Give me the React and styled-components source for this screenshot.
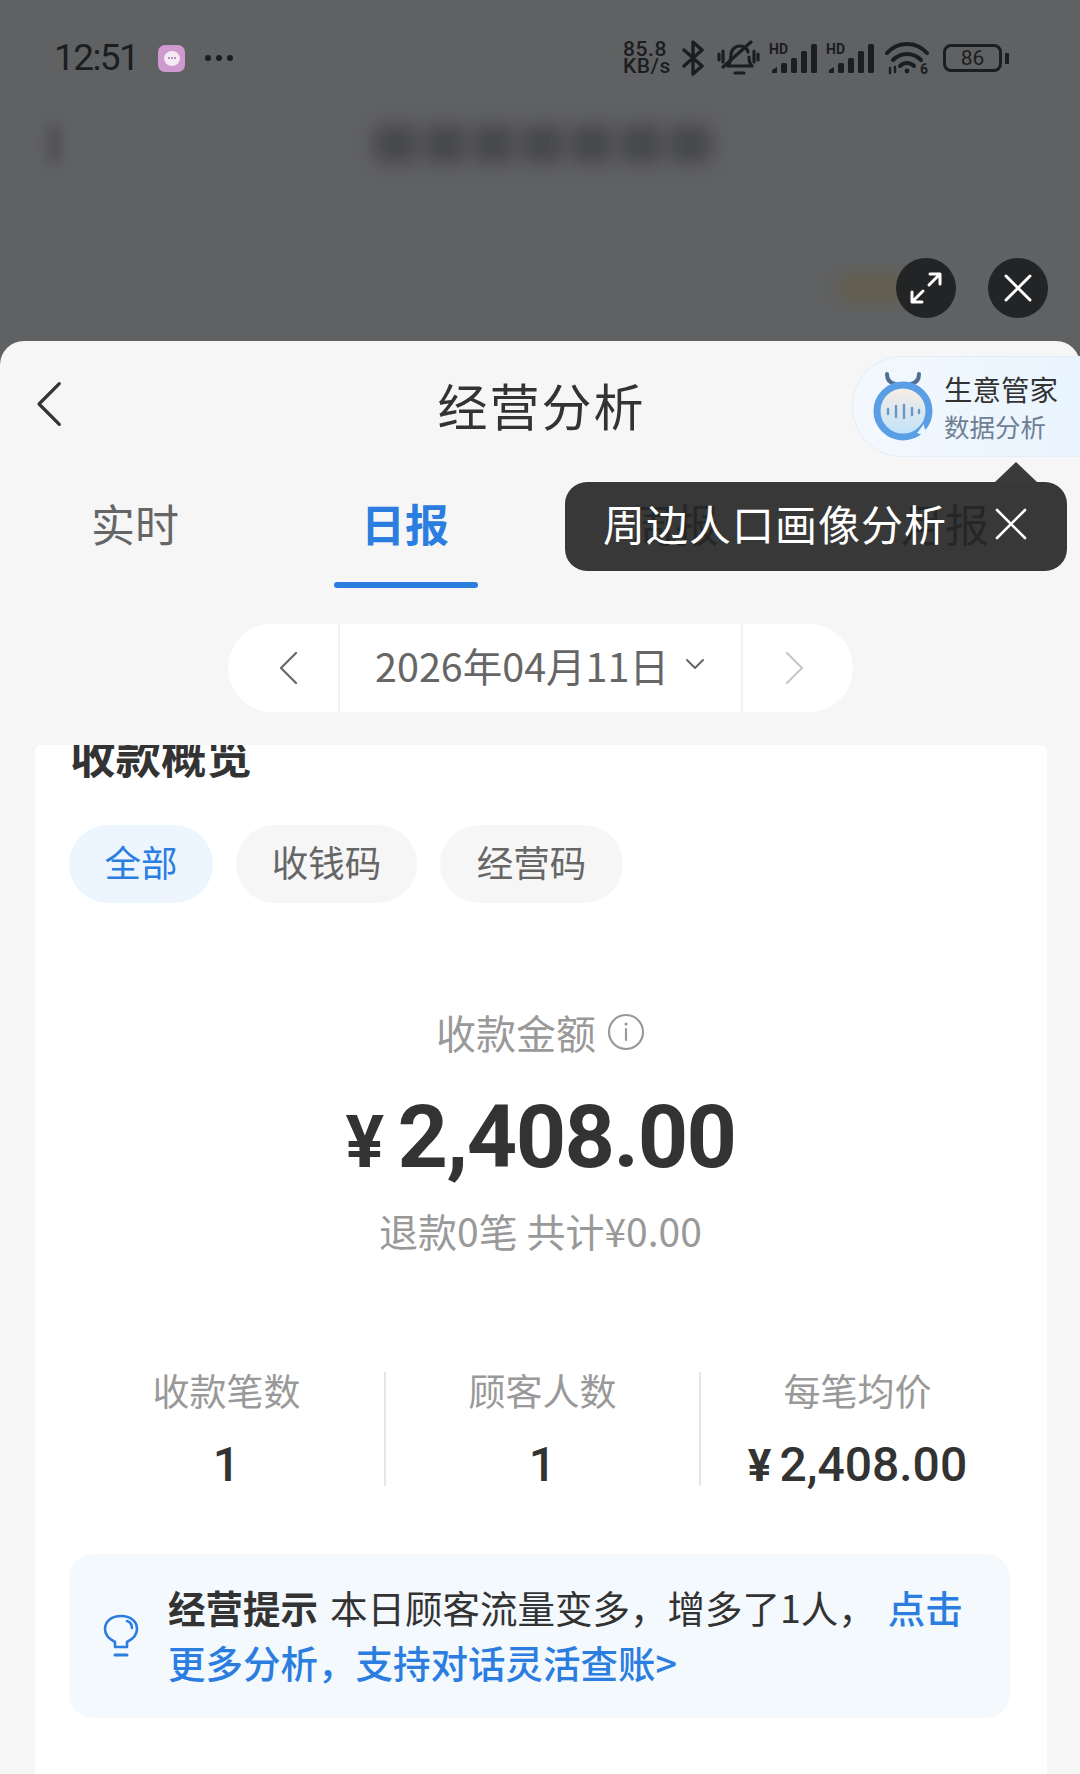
import React from 'react';
import styled, {createGlobalStyle} from 'styled-components';

const GlobalStyle = createGlobalStyle`
  html, body {
    margin: 0;
    padding: 0;
    background: #606163;
  }

  * {
    box-sizing: border-box;
  }

  body {
    font-family: "Noto Sans CJK SC", "Noto Sans", sans-serif;
  }
`

const Page = styled.div`
  width: 1080px;
  height: 1774px;
  overflow: hidden;
  position: relative;
  display: flex;
  flex-direction: column;
  background: #606163;
`

const Backdrop = styled.div`
  height: 341px;
  flex: none;
  display: flex;
  flex-direction: column;
  padding: 40px 72px 0 54px;
`

const StatusBar = styled.div`
  height: 36px;
  display: flex;
  align-items: center;
  justify-content: space-between;
  color: #1b1d1f;
`

const StatusLeft = styled.div`
  display: flex;
  align-items: center;
`

const Time = styled.span`
  font-family: "Roboto", sans-serif;
  font-size: 37px;
  letter-spacing: -1.6px;
  line-height: 36px;
  width: 104px;
`

const AppBadge = styled.span`
  width: 27px;
  height: 27px;
  border-radius: 7px;
  background: #cf9ad0;
  display: flex;
  align-items: center;
  justify-content: center;
`

const BadgeDot = styled.span`
  width: 16px;
  height: 15px;
  border-radius: 50%;
  background: #f4eaf5;
  display: flex;
  align-items: center;
  justify-content: center;
  gap: 1px;

  i {
    width: 2px;
    height: 2px;
    border-radius: 50%;
    background: #a678a8;
  }
`

const MoreDots = styled.span`
  display: flex;
  gap: 5px;
  margin-left: 20px;

  i {
    width: 6px;
    height: 6px;
    border-radius: 50%;
    background: #1b1d1f;
  }
`

const StatusRight = styled.div`
  display: flex;
  align-items: center;
  gap: 9px;
`

const Speed = styled.span`
  font-family: "Roboto", sans-serif;
  font-weight: 500;
  font-size: 21px;
  line-height: 17px;
  width: 50px;
  letter-spacing: .6px;
  white-space: nowrap;
`

const Battery = styled.span`
  width: 59px;
  height: 28px;
  margin: 0 6px 0 5px;
  border: 3px solid #1b1d1f;
  border-radius: 8px;
  font-family: "Roboto", sans-serif;
  font-size: 21px;
  line-height: 22px;
  text-align: center;
  position: relative;

  &::after {
    content: "";
    position: absolute;
    right: -10px;
    top: 6px;
    width: 4px;
    height: 11px;
    border-radius: 1px;
    background: #1b1d1f;
  }
`

const BluetoothIcon = styled.svg`
  margin-right: 3px;
`

const WifiIcon = styled.svg`
  margin-left: 2px;
`

const BlurRow = styled.div`
  margin-top: 48px;
  height: 40px;
  display: flex;
  align-items: center;
`

const BlurChevron = styled.span`
  width: 12px;
  height: 40px;
  margin-left: -6px;
  background: #4e4f51;
  border-radius: 6px;
  filter: blur(6px);
`

const BlurTitle = styled.div`
  margin-left: 313px;
  display: flex;
  gap: 4px;

  span {
    width: 45px;
    height: 38px;
    border-radius: 12px;
    background: #47484a;
    filter: blur(9px);
  }
`

const FloatRow = styled.div`
  margin-top: 94px;
  margin-right: -40px;
  display: flex;
  justify-content: flex-end;
  align-items: center;
  gap: 32px;
  position: relative;
`

const BlurTag = styled.span`
  position: absolute;
  right: 118px;
  width: 92px;
  height: 30px;
  background: #625e50;
  filter: blur(7px);
`

const RoundButton = styled.button`
  position: relative;
  width: 60px;
  height: 60px;
  border: none;
  padding: 0;
  border-radius: 50%;
  background: #232425;
  display: flex;
  align-items: center;
  justify-content: center;
`

const Sheet = styled.div`
  flex: 1;
  min-height: 0;
  position: relative;
  display: flex;
  flex-direction: column;
  background: #f6f6f6;
  border-radius: 24px 24px 0 0;
`

const Header = styled.div`
  height: 120px;
  padding: 6px 0 0 3px;
  display: flex;
  align-items: center;
  justify-content: center;
  position: relative;
`

const BackButton = styled.div`
  position: absolute;
  left: 35px;
  top: 40px;
  line-height: 0;
`

const Title = styled.h1`
  margin: 0;
  font-size: 50px;
  font-weight: 400;
  letter-spacing: 2px;
  color: #333;
  line-height: 1;
`

const Assistant = styled.div`
  position: absolute;
  right: 0;
  top: 15px;
  width: 228px;
  height: 101px;
  display: flex;
  align-items: center;
  gap: 11px;
  padding-left: 20px;
  border: 1px solid #e3eef9;
  border-right: none;
  border-radius: 50px 0 0 50px;
  background: linear-gradient(90deg, #f3f8fd, #e9f4fe);
`

const AssistantText = styled.div`
  display: flex;
  flex-direction: column;
  gap: 2px;
`

const AssistantName = styled.span`
  font-size: 28.5px;
  line-height: 36px;
  color: #333;
  white-space: nowrap;
`

const AssistantSub = styled.span`
  font-size: 25.5px;
  line-height: 34px;
  color: #6f8095;
  white-space: nowrap;
`

const Tabs = styled.div`
  height: 127px;
  display: grid;
  grid-template-columns: repeat(4, 270px);
`

const Tab = styled.div`
  position: relative;
  display: flex;
  justify-content: center;
  padding-top: 31px;
  font-size: 44px;
  line-height: 62px;
  font-weight: ${p => (p.$active ? 700 : 400)};
  color: ${p => (p.$active ? '#2b7de0' : '#666')};

  ${p => p.$active && `
    &::after {
      content: "";
      position: absolute;
      left: 64px;
      bottom: 0;
      width: 144px;
      height: 6px;
      border-radius: 3px;
      background: #2b7de0;
    }
  `}
`

const Tooltip = styled.div`
  position: absolute;
  left: 565px;
  top: 141px;
  width: 502px;
  height: 89px;
  border-radius: 22px;
  background: rgba(30, 30, 30, .88);
  color: #fff;
  display: flex;
  align-items: center;
  justify-content: space-between;
  padding: 0 40px 5px 38px;
  font-size: 42px;
  letter-spacing: 1px;
  white-space: nowrap;

  &::before {
    content: "";
    position: absolute;
    right: 30px;
    top: -20px;
    border-left: 21px solid transparent;
    border-right: 21px solid transparent;
    border-bottom: 20px solid #3a3a3a;
  }
`

const TooltipText = styled.span`
  padding-bottom: 4px;
`

const DateBar = styled.div`
  margin: 36px auto 0;
  width: 625px;
  height: 88px;
  flex: none;
  display: grid;
  grid-template-columns: 112px 1fr 112px;
  background: #fff;
  border-radius: 44px;
`

const DateArrow = styled.div`
  display: flex;
  align-items: center;
  justify-content: center;
  padding-left: ${p => (p.$side === 'left' ? 10 : 0)}px;
  padding-right: ${p => (p.$side === 'right' ? 6 : 0)}px;
  ${p => p.$side === 'left' ? 'border-right' : 'border-left'}: 2px solid #f2f2f2;
`

const DateLabel = styled.div`
  display: flex;
  align-items: center;
  justify-content: center;
  gap: 16px;
  padding-bottom: 8px;
  font-size: 39.5px;
  color: #666;
  white-space: nowrap;
`

const Scroller = styled.div`
  margin: 33px 33px 0 35px;
  flex: 1;
  min-height: 0;
  overflow: hidden;
  background: #fff;
  border-radius: 6px 6px 0 0;
  padding: 0 37px 0 34px;
`

const SectionTitle = styled.h2`
  margin: -21px 0 0 1px;
  font-size: 45.5px;
  line-height: 60px;
  font-weight: 700;
  color: #333;
`

const Chips = styled.div`
  margin-top: 41px;
  display: flex;
  gap: 23px;
`

const Chip = styled.div`
  height: 78px;
  width: ${p => p.$width}px;
  border-radius: 39px;
  padding-bottom: 6px;
  display: flex;
  align-items: center;
  justify-content: center;
  font-size: 36.5px;
  background: ${p => (p.$active ? '#edf6fe' : '#f6f6f6')};
  color: ${p => (p.$active ? '#2b7de0' : '#666')};
`

const Summary = styled.div`
  margin-top: 105px;
  padding-left: 2px;
  display: flex;
  flex-direction: column;
  align-items: center;
`

const SummaryLabel = styled.div`
  display: flex;
  align-items: center;
  gap: 11px;
  font-size: 40px;
  line-height: 48px;
  color: #999;
`

const Amount = styled.div`
  margin-top: 26px;
  display: flex;
  align-items: baseline;
  gap: 15px;
  font-family: "Roboto", sans-serif;
  font-weight: 700;
  color: #333;
  font-size: 88px;
  letter-spacing: -1.5px;
  line-height: 110px;
`

const Yen = styled.span`
  font-size: ${p => p.$size}px;
  font-weight: 700;
`

const Refund = styled.div`
  margin-top: 7px;
  font-size: 39px;
  line-height: 50px;
  color: #999;
`

const Stats = styled.div`
  margin-top: 117px;
  display: grid;
  grid-template-columns: repeat(3, 315px);
`

const Stat = styled.div`
  height: 114px;
  display: flex;
  flex-direction: column;
  align-items: center;
  border-left: ${p => (p.$first ? 'none' : '2px solid #e6e6e6')};
`

const StatLabel = styled.div`
  font-size: 37px;
  line-height: 36px;
  color: #999;
`

const StatValue = styled.div`
  margin-top: 29px;
  font-family: "Roboto", sans-serif;
  font-weight: 500;
  font-size: 48px;
  line-height: 56px;
  color: #333;
  display: flex;
  align-items: baseline;
  gap: 8px;
`

const TipBox = styled.div`
  margin-top: 68px;
  width: 941px;
  height: 164px;
  border-radius: 24px;
  background: #f4f9fe;
  display: flex;
  align-items: center;
  padding: 0 0 0 34px;
  gap: 29px;
`

const TipText = styled.div`
  width: 815px;
  padding-bottom: 4px;
  font-size: 37.5px;
  line-height: 55px;
  color: #333;
`

const TipHead = styled.b`
  font-weight: 700;
  margin-right: 12px;
`

const TipLink = styled.span`
  color: #2b7de0;
  font-weight: 500;
  margin-left: 12px;
`

const Chevron = ({dir, color, w, h, sw}) => (
    <svg width={w} height={h} viewBox="0 0 20 34" fill="none" stroke={color} strokeWidth={sw} strokeLinecap="round"
         strokeLinejoin="round" preserveAspectRatio="none">
        <path d={dir === 'left' ? 'M18 2 3 17l15 15' : 'M2 2l15 15L2 32'}/>
    </svg>
)

const Signal = () => (
    <svg width="48" height="32" viewBox="0 0 48 32" fill="#1b1d1f">
        <text x="0" y="12" fontSize="14" fontWeight="700" fontFamily="Roboto, sans-serif">HD</text>
        <path d="M3 31v-3l5-3v6z"/>
        <rect x="12" y="21" width="6" height="10" rx="1.5"/>
        <rect x="22" y="16" width="6" height="15" rx="1.5"/>
        <rect x="32" y="9" width="6" height="22" rx="1.5"/>
        <rect x="42" y="2" width="6" height="29" rx="1.5"/>
    </svg>
)

const Bluetooth = () => (
    <BluetoothIcon width="23" height="36" viewBox="0 0 23 36" fill="none" stroke="#1b1d1f" strokeWidth="3.4"
         strokeLinejoin="round" strokeLinecap="round">
        <path d="M2 10l18 16-9 8V2l9 8L2 26"/>
    </BluetoothIcon>
)

const MutedBell = () => (
    <svg width="43" height="37" viewBox="0 0 43 37" fill="none" stroke="#1b1d1f" strokeWidth="3.2"
         strokeLinecap="round" strokeLinejoin="round">
        <path d="M11 26c2-3 3-6 3-11 0-5 4-9 9-9 4 0 7 2 8 6M32 17c0 4 1 7 3 9H11"/>
        <path d="M6 27 34 2"/>
        <path d="M18 33h9"/>
        <path d="M2 14v6M6 11v11M37 11v11M41 14v6"/>
    </svg>
)

const Wifi = () => (
    <WifiIcon width="44" height="34" viewBox="0 0 44 34" fill="none" stroke="#1b1d1f" strokeWidth="4"
         strokeLinecap="round">
        <path d="M2 12c11-12 29-12 40 0"/>
        <path d="M8 19c8-8 20-8 28 0"/>
        <path d="M15 25c4-4 10-4 14 0"/>
        <circle cx="22" cy="30" r="2.4" fill="#1b1d1f" stroke="none"/>
        <path d="M5 27v5M10 26v5" strokeWidth="2.4"/>
        <text x="35" y="33" fontSize="14" fontWeight="700" fontFamily="Roboto, sans-serif" fill="#1b1d1f"
              stroke="none">6</text>
    </WifiIcon>
)

const AssistantLogo = () => (
    <svg width="60" height="69" viewBox="0 0 60 69" fill="none">
        <defs>
            <linearGradient id="face" x1="0" y1="0" x2="0" y2="1">
                <stop offset="0" stopColor="#fbeee4"/>
                <stop offset="1" stopColor="#bfe2fb"/>
            </linearGradient>
        </defs>
        <path d="M22 12c-5-1-8-4-8-10M38 12c5-1 8-4 8-10" stroke="#4f6f92" strokeWidth="4" strokeLinecap="round"/>
        <circle cx="30" cy="39" r="26" fill="url(#face)" stroke="#5a9fe6" strokeWidth="7"/>
        <path d="M44 61c4 2 9 1 11-2-3-1-4-3-4-7z" fill="#eaf4fe"/>
        <path d="M15 37v5M23 34v11M31 33v13M39 36v7M46 38v3" stroke="#6c97c4" strokeWidth="2.4"
              strokeLinecap="round"/>
    </svg>
)

const Bulb = () => (
    <svg width="36" height="44" viewBox="0 0 36 44" fill="none" stroke="#2b7de0" strokeWidth="2.6"
         strokeLinecap="round" strokeLinejoin="round">
        <path d="M12 33v-5C6 25 2 21 2 15 2 7 9 2 18 2s16 5 16 13c0 6-4 10-10 13v5z"/>
        <path d="M24 7c3 1 5 4 5 7"/>
        <path d="M12 41h12" strokeWidth="3"/>
    </svg>
)

const InfoIcon = () => (
    <svg width="38" height="38" viewBox="0 0 38 38" fill="none" stroke="#999" strokeWidth="2.2">
        <circle cx="19" cy="19" r="17"/>
        <path d="M19 16v11" strokeLinecap="round"/>
        <circle cx="19" cy="11" r="1.6" fill="#999" stroke="none"/>
    </svg>
)

const TABS = ['实时', '日报', '周报', '月报']

const CHIPS = [
    {label: '全部', width: 144, active: true},
    {label: '收钱码', width: 181},
    {label: '经营码', width: 183},
]

const STATS = [
    {label: '收款笔数', value: '1'},
    {label: '顾客人数', value: '1'},
    {label: '每笔均价', value: '2,408.00', yen: true},
]

const App = () => (
    <Page>
        <GlobalStyle/>
        <Backdrop>
            <StatusBar>
                <StatusLeft>
                    <Time>12:51</Time>
                    <AppBadge><BadgeDot><i/><i/><i/></BadgeDot></AppBadge>
                    <MoreDots><i/><i/><i/></MoreDots>
                </StatusLeft>
                <StatusRight>
                    <Speed>85.8<br/>KB/s</Speed>
                    <Bluetooth/>
                    <MutedBell/>
                    <Signal/>
                    <Signal/>
                    <Wifi/>
                    <Battery>86</Battery>
                </StatusRight>
            </StatusBar>
            <BlurRow>
                <BlurChevron/>
                <BlurTitle>
                    {Array.from({length: 7}).map((_, i) => <span key={i}/>)}
                </BlurTitle>
            </BlurRow>
            <FloatRow>
                <BlurTag/>
                <RoundButton aria-label="expand">
                    <svg width="34" height="34" viewBox="0 0 34 34" fill="none" stroke="#fff" strokeWidth="3"
                         strokeLinecap="round" strokeLinejoin="round">
                        <path d="M21 3h10v10M31 3 20 14M13 31H3V21M3 31l11-11"/>
                    </svg>
                </RoundButton>
                <RoundButton aria-label="close">
                    <svg width="30" height="30" viewBox="0 0 30 30" fill="none" stroke="#fff" strokeWidth="3"
                         strokeLinecap="round">
                        <path d="M3 3l24 24M27 3 3 27"/>
                    </svg>
                </RoundButton>
            </FloatRow>
        </Backdrop>
        <Sheet>
            <Header>
                <BackButton><Chevron dir="left" color="#333" w={27} h={46} sw={2.4}/></BackButton>
                <Title>经营分析</Title>
                <Assistant>
                    <AssistantLogo/>
                    <AssistantText>
                        <AssistantName>生意管家</AssistantName>
                        <AssistantSub>数据分析</AssistantSub>
                    </AssistantText>
                </Assistant>
            </Header>
            <Tabs>
                {TABS.map((tab, i) => <Tab key={tab} $active={i === 1}>{tab}</Tab>)}
            </Tabs>
            <Tooltip>
                <TooltipText>周边人口画像分析</TooltipText>
                <svg width="32" height="32" viewBox="0 0 32 32" fill="none" stroke="#fff" strokeWidth="2.6"
                     strokeLinecap="round">
                    <path d="M2 2l28 28M30 2 2 30"/>
                </svg>
            </Tooltip>
            <DateBar>
                <DateArrow $side="left"><Chevron dir="left" color="#666" w={20} h={34} sw={2.2}/></DateArrow>
                <DateLabel>
                    2026年04月11日
                    <svg width="20" height="12" viewBox="0 0 20 12" fill="none" stroke="#666" strokeWidth="2"
                         strokeLinecap="round" strokeLinejoin="round">
                        <path d="M2 2l8 8 8-8"/>
                    </svg>
                </DateLabel>
                <DateArrow $side="right"><Chevron dir="right" color="#c8c8c8" w={20} h={34} sw={2.2}/></DateArrow>
            </DateBar>
            <Scroller>
                <SectionTitle>收款概览</SectionTitle>
                <Chips>
                    {CHIPS.map(chip => (
                        <Chip key={chip.label} $width={chip.width} $active={chip.active}>{chip.label}</Chip>
                    ))}
                </Chips>
                <Summary>
                    <SummaryLabel>收款金额 <InfoIcon/></SummaryLabel>
                    <Amount><Yen $size={72}>¥</Yen>2,408.00</Amount>
                    <Refund>退款0笔 共计¥0.00</Refund>
                </Summary>
                <Stats>
                    {STATS.map((stat, i) => (
                        <Stat key={stat.label} $first={i === 0}>
                            <StatLabel>{stat.label}</StatLabel>
                            <StatValue>{stat.yen && <Yen $size={44}>¥</Yen>}{stat.value}</StatValue>
                        </Stat>
                    ))}
                </Stats>
                <TipBox>
                    <Bulb/>
                    <TipText>
                        <TipHead>经营提示</TipHead>本日顾客流量变多，增多了1人，
                        <TipLink>点击更多分析，支持对话灵活查账&gt;</TipLink>
                    </TipText>
                </TipBox>
            </Scroller>
        </Sheet>
    </Page>
)

export default App;
